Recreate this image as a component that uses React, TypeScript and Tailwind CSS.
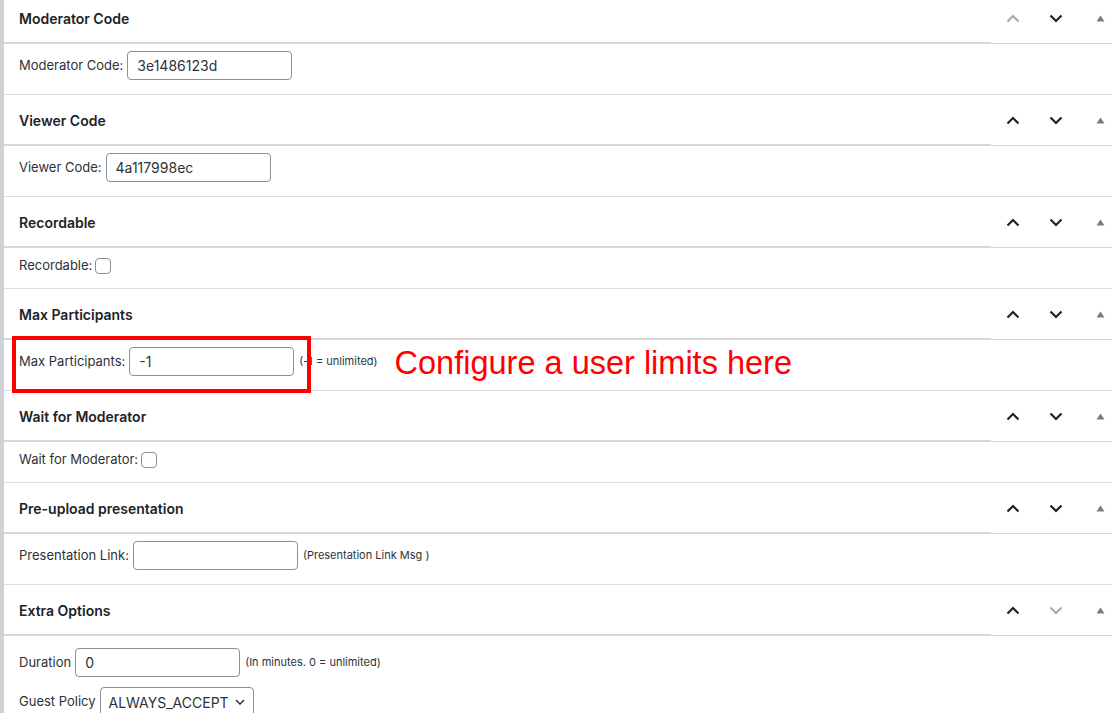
import { ReactNode } from 'react';

const font = { fontFamily: 'Inter, "Liberation Sans", sans-serif' };

function Chevron({ dir, disabled }: { dir: 'up' | 'down'; disabled?: boolean }) {
    const color = disabled ? '#a7aaad' : '#1d2327';
    return (
        <svg width="14" height="9" viewBox="0 0 14 9" fill="none">
            {dir === 'up' ? (
                <path d="M1.5 7.5 L7 2 L12.5 7.5" stroke={color} strokeWidth="2.2" />
            ) : (
                <path d="M1.5 1.5 L7 7 L12.5 1.5" stroke={color} strokeWidth="2.2" />
            )}
        </svg>
    );
}

function Section({
    title,
    upDisabled,
    downDisabled,
    children,
    bodyClass = 'pt-[7px] pb-[14px]',
}: {
    title: string;
    upDisabled?: boolean;
    downDisabled?: boolean;
    children: ReactNode;
    bodyClass?: string;
}) {
    return (
        <div>
            <div className="flex h-[51px]">
                <div className="flex-1 flex items-center pl-[15px] pt-[1px] border-b-2 border-[#d6d7d9]">
                    <h2 className="text-[14px] font-semibold text-[#1d2327]">{title}</h2>
                </div>
                <div className="w-[121px] flex items-center border-b border-[#d6d7d9]">
                    <div className="ml-[15px]">
                        <Chevron dir="up" disabled={upDisabled} />
                    </div>
                    <div className="ml-[29px]">
                        <Chevron dir="down" disabled={downDisabled} />
                    </div>
                    <svg className="ml-[33px]" width="9" height="7" viewBox="0 0 9 7">
                        <polygon points="4.5,0.5 8.5,6.5 0.5,6.5" fill="#787c82" />
                    </svg>
                </div>
            </div>
            <div className={`relative px-[15px] border-b border-[#dcdcde] ${bodyClass}`}>{children}</div>
        </div>
    );
}

function TextInput({ value, width = 'w-[165px]' }: { value: string; width?: string }) {
    return (
        <input
            type="text"
            defaultValue={value}
            className={`${width} h-[29px] px-[9px] border border-[#8c8f94] rounded-[4px] text-[14px] text-[#2c3338] bg-white outline-none`}
        />
    );
}

function Checkbox() {
    return <span className="inline-block w-[16px] h-[16px] border border-[#8c8f94] rounded-[4px] bg-white" />;
}

function Help({ children }: { children: ReactNode }) {
    return <span className="text-[11px] text-[#2c3338] ml-[5px]">{children}</span>;
}

export default function App() {
    return (
        <div className="w-[1112px] h-[713px] overflow-hidden bg-white border-l-4 border-[#cdd0d4]" style={font}>
            <div className="-mt-[7px]">
                <Section title="Moderator Code" upDisabled>
                    <div className="flex items-center text-[13px] text-[#2c3338]">
                        <span className="mr-[4px]">Moderator Code:</span>
                        <TextInput value="3e1486123d" />
                    </div>
                </Section>
                <Section title="Viewer Code">
                    <div className="flex items-center text-[13px] text-[#2c3338]">
                        <span className="mr-[4px]">Viewer Code:</span>
                        <TextInput value="4a117998ec" />
                    </div>
                </Section>
                <Section title="Recordable" bodyClass="pt-[8px] pb-[13px]">
                    <div className="flex items-center h-[19px] text-[13px] text-[#2c3338]">
                        <span className="mr-[3px]">Recordable:</span>
                        <Checkbox />
                    </div>
                </Section>
                <Section title="Max Participants">
                    <div className="flex items-center h-[29px] text-[13px] text-[#2c3338]">
                        <span className="mr-[4px]">Max Participants:</span>
                        <TextInput value="-1" />
                        <Help>(-1 = unlimited)</Help>
                        <span
                            className="ml-[17px] h-[29px] leading-[29px] translate-y-[2px] text-[32.5px] text-[#ff0000] whitespace-nowrap"
                            style={{ fontFamily: '"Liberation Sans", Arial, sans-serif' }}
                        >
                            Configure a user limits here
                        </span>
                    </div>
                    <div className="absolute left-[8px] -top-[4px] w-[299px] h-[57px] border-4 border-[#ff0000]" />
                </Section>
                <Section title="Wait for Moderator" bodyClass="pt-[8px] pb-[13px]">
                    <div className="flex items-center h-[19px] text-[13px] text-[#2c3338]">
                        <span className="mr-[3px]">Wait for Moderator:</span>
                        <Checkbox />
                    </div>
                </Section>
                <Section title="Pre-upload presentation">
                    <div className="flex items-center text-[13px] text-[#2c3338]">
                        <span className="mr-[4px]">Presentation Link:</span>
                        <TextInput value="" />
                        <Help>(Presentation Link Msg )</Help>
                    </div>
                </Section>
                <Section title="Extra Options" downDisabled bodyClass="pt-[12px] pb-[14px]">
                    <div className="flex items-center text-[13px] text-[#2c3338]">
                        <span className="mr-[4px]">Duration</span>
                        <TextInput value="0" />
                        <Help>(In minutes. 0 = unlimited)</Help>
                    </div>
                    <div className="flex items-center mt-[10px] text-[13px] text-[#2c3338]">
                        <span className="mr-[4px]">Guest Policy</span>
                        <div className="relative">
                            <select
                                defaultValue="ALWAYS_ACCEPT"
                                className="appearance-none w-[154px] h-[30px] pl-[8px] pr-[24px] border border-[#8c8f94] rounded-[4px] text-[14px] text-[#2c3338] bg-white outline-none"
                            >
                                <option>ALWAYS_ACCEPT</option>
                                <option>ALWAYS_DENY</option>
                                <option>ASK_MODERATOR</option>
                            </select>
                            <svg
                                className="absolute right-[9px] top-[12px] pointer-events-none"
                                width="10"
                                height="6"
                                viewBox="0 0 10 6"
                                fill="none"
                            >
                                <path d="M1 1 L5 5 L9 1" stroke="#2c3338" strokeWidth="1.5" />
                            </svg>
                        </div>
                    </div>
                </Section>
            </div>
        </div>
    );
}
